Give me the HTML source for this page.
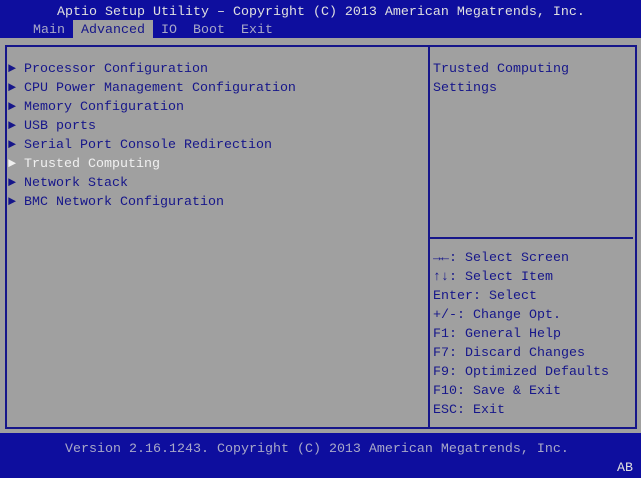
<!DOCTYPE html><html><head><style>
*{margin:0;padding:0}
body{width:641px;height:478px;background:#a0a0a0;position:relative;overflow:hidden;font-family:"Liberation Mono",monospace;font-size:13.33px;line-height:19px}
.t{position:absolute;white-space:pre;color:#16168a}
.top{position:absolute;left:0;top:0;width:641px;height:38px;background:#0e0e9e}
.bot{position:absolute;left:0;top:433px;width:641px;height:45px;background:#0e0e9e}
.w{color:#e0e0e0}
.g{color:#a8a8c8}
.ln{position:absolute;background:#16168a}
</style></head><body>
<div class="top"></div>
<div class="t w" style="left:57px;top:3px">Aptio Setup Utility – Copyright (C) 2013 American Megatrends, Inc.</div>
<div style="position:absolute;left:73px;top:20px;width:80px;height:18px;background:#a0a0a0"></div>
<div class="t g" style="left:33px;top:21px">Main  <span style="color:#16168a">Advanced</span>  IO  Boot  Exit</div>
<div class="ln" style="left:5px;top:45px;width:632px;height:2px"></div>
<div class="ln" style="left:5px;top:427px;width:632px;height:2px"></div>
<div class="ln" style="left:5px;top:45px;width:2px;height:384px"></div>
<div class="ln" style="left:635px;top:45px;width:2px;height:384px"></div>
<div class="ln" style="left:428px;top:45px;width:2px;height:384px"></div>
<div class="ln" style="left:430px;top:237px;width:203px;height:2px"></div>
<div class="t" style="left:8px;top:60px">► Processor Configuration
► CPU Power Management Configuration
► Memory Configuration
► USB ports
► Serial Port Console Redirection
<span style="color:#f0f0f0">► Trusted Computing</span>
► Network Stack
► BMC Network Configuration</div>
<div class="t" style="left:433px;top:60px">Trusted Computing
Settings</div>
<div class="t" style="left:433px;top:249px"><b>→←</b>: Select Screen
<b>↑↓</b>: Select Item
Enter: Select
+/-: Change Opt.
F1: General Help
F7: Discard Changes
F9: Optimized Defaults
F10: Save &amp; Exit
ESC: Exit</div>
<div class="bot"></div>
<div class="t g" style="left:65px;top:440px">Version 2.16.1243. Copyright (C) 2013 American Megatrends, Inc.</div>
<div class="t w" style="left:617px;top:459px">AB</div>
</body></html>
